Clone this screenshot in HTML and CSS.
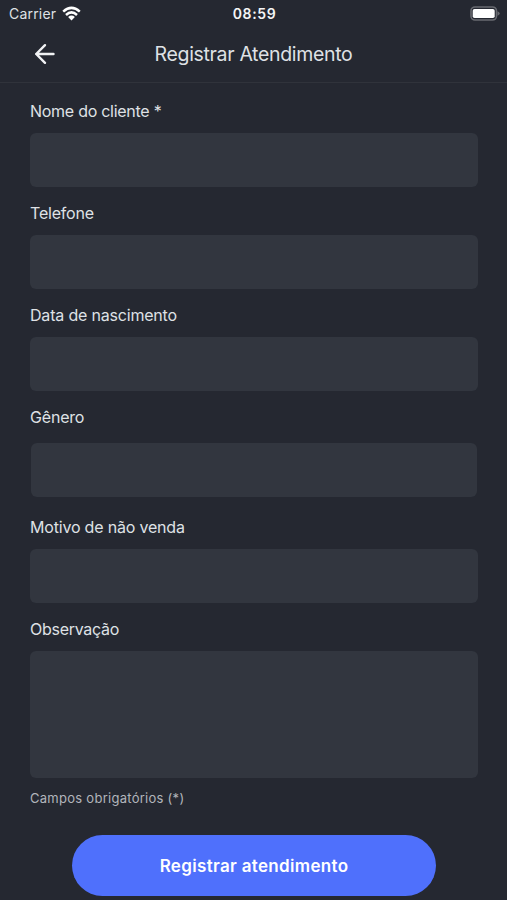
FILE: index.html
```html
<!DOCTYPE html>
<html lang="pt-BR">
<head>
<meta charset="utf-8">
<title>Registrar Atendimento</title>
<link rel="stylesheet" href="styles.css">
</head>
<body>
<div class="status">
  <div class="network"><span class="carrier">Carrier</span>
    <svg class="wifi" width="19" height="15" viewBox="0 0 19 15" fill="none" stroke="#fff" stroke-width="2.5"><path d="M1.2 5.6Q9.5-1.8 17.8 5.6M4 9Q9.5 3.8 15 9"/><path fill="#fff" stroke="none" d="M6.1 10.9Q9.5 8 12.9 10.9L9.5 14.4Z"/></svg>
  </div>
  <time class="clock">08:59</time>
  <svg class="battery" width="31" height="16" viewBox="0 0 31 16"><rect x="2" y="1" width="25.5" height="13" rx="4" fill="none" stroke="#686a70" stroke-width="1.6"/><rect x="3.7" y="3" width="22" height="9" rx="1.8" fill="#fff"/><path d="M28.5 5.2Q30.7 6 30.7 7.5T28.5 9.8Z" fill="#686a70"/></svg>
</div>
<header class="header">
  <svg class="back" width="22" height="22" viewBox="0 0 22 22" fill="none" stroke="#f1f2f4" stroke-width="2.4" stroke-linecap="round" stroke-linejoin="round"><path d="M19.5 11H2.2M11 2.2L2.2 11l8.8 8.8"/></svg>
  <h1 class="title">Registrar Atendimento</h1>
</header>
<form class="form">
  <div class="field"><label class="label name" for="nome">Nome do cliente *</label><input class="input" id="nome"></div>
  <div class="field"><label class="label" for="telefone">Telefone</label><input class="input" id="telefone"></div>
  <div class="field"><label class="label" for="nascimento">Data de nascimento</label><input class="input" id="nascimento"></div>
  <div class="field select-field"><label class="label" for="genero">Gênero</label><input class="input" id="genero"></div>
  <div class="field"><label class="label" for="motivo">Motivo de não venda</label><input class="input" id="motivo"></div>
  <div class="field area-field"><label class="label note" for="obs">Observação</label><textarea class="input area" id="obs"></textarea></div>
  <p class="hint">Campos obrigatórios (*)</p>
  <button class="submit" type="button">Registrar atendimento</button>
</form>
</body>
</html>
```
FILE: styles.css
```css
* { box-sizing: border-box; }
body {
  margin: 0;
  height: 900px;
  overflow: hidden;
  background: #252831;
  color: #dfe1e5;
  font-family: Inter, "Liberation Sans", sans-serif;
}
.status {
  display: grid;
  grid-template-columns: 1fr auto 1fr;
  align-items: center;
  height: 28px;
  padding: 0 7px 0 9px;
}
.network { display: flex; align-items: center; gap: 6px; }
.wifi { margin-top: -2px; }
.carrier { font-size: 14px; line-height: 20px; letter-spacing: .2px; }
.clock {
  font-size: 14px;
  font-weight: 600;
  line-height: 20px;
  letter-spacing: .6px;
  color: #f4f5f6;
}
.battery { justify-self: end; margin-top: -1px; }
.header {
  display: grid;
  grid-template-columns: 120px 1fr 120px;
  align-items: center;
  height: 55px;
  padding-bottom: 2px;
  border-bottom: 1px solid #30333b;
}
.back { margin-left: 34px; }
.title {
  margin: 0;
  text-align: center;
  white-space: nowrap;
  font-size: 19.5px;
  font-weight: 400;
  line-height: 26px;
  letter-spacing: -.33px;
}
.form { padding: 18px 29px 0 30px; }
.field { display: flex; flex-direction: column; align-items: flex-start; height: 102px; }
.label { font-size: 16px; line-height: 20px; letter-spacing: -.19px; white-space: nowrap; }
.name, .note { letter-spacing: -.27px; }
.input {
  width: 100%;
  height: 54px;
  margin-top: 11.5px;
  padding: 0 16px;
  border: 0;
  border-radius: 6px;
  outline: 0;
  background: #32363f;
  color: inherit;
  font: inherit;
  resize: none;
}
.select-field { height: 110px; }
.select-field .input { width: 446px; margin: 16px 0 0 1px; }
.area-field { height: auto; }
.area { height: 127px; margin-top: 12px; }
.hint {
  margin: 11px 0 0;
  font-size: 13px;
  line-height: 18px;
  letter-spacing: .27px;
  color: #b2b5bb;
}
.submit {
  display: block;
  width: 364px;
  height: 61px;
  margin: 28px 0 0 42px;
  padding: 0;
  border: 0;
  border-radius: 31px;
  background: #4f70fc;
  color: #fff;
  font-family: inherit;
  font-size: 17px;
  font-weight: 600;
  letter-spacing: .33px;
}
```
